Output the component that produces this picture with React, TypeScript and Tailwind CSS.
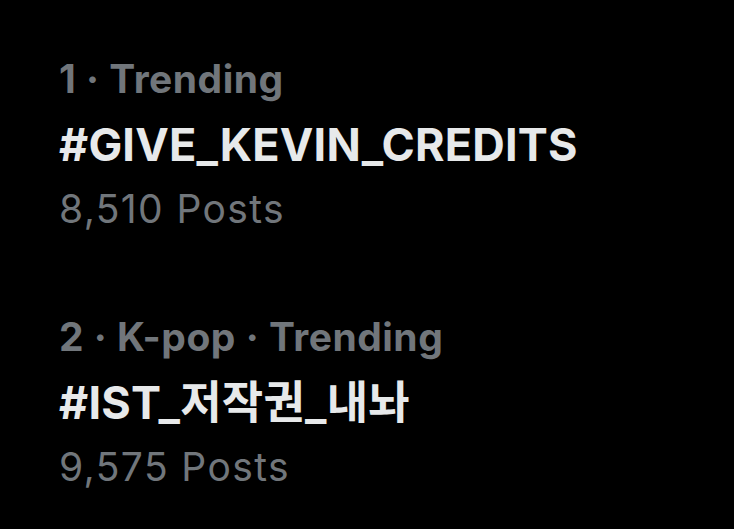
import React from 'react';

interface TrendItem {
  meta: string;
  tag: string;
  posts: string;
}

const trends: TrendItem[] = [
  { meta: '1 · Trending', tag: '#GIVE_KEVIN_CREDITS', posts: '8,510 Posts' },
  { meta: '2 · K-pop · Trending', tag: '#IST_저작권_내놔', posts: '9,575 Posts' },
];

const TrendRow: React.FC<{ item: TrendItem }> = ({ item }) => (
  <div className="flex flex-col">
    <div className="text-[39px] leading-[48px] font-bold tracking-[0.5px] text-[#71767b]">{item.meta}</div>
    <div className="mt-[12px] text-[45px] leading-[60px] font-bold tracking-[0.2px] text-[#e7e9ea]">{item.tag}</div>
    <div className="mt-[10px] text-[39px] leading-[48px] tracking-[1.4px] text-[#71767b]">{item.posts}</div>
  </div>
);

const App: React.FC = () => {
  return (
    <div
      className="w-[734px] h-[529px] bg-black overflow-hidden pl-[59px] pt-[55px] flex flex-col gap-[80px]"
      style={{ fontFamily: 'Inter, "Noto Sans CJK KR", sans-serif' }}
    >
      {trends.map((t) => (
        <TrendRow key={t.tag} item={t} />
      ))}
    </div>
  );
};

export default App;
